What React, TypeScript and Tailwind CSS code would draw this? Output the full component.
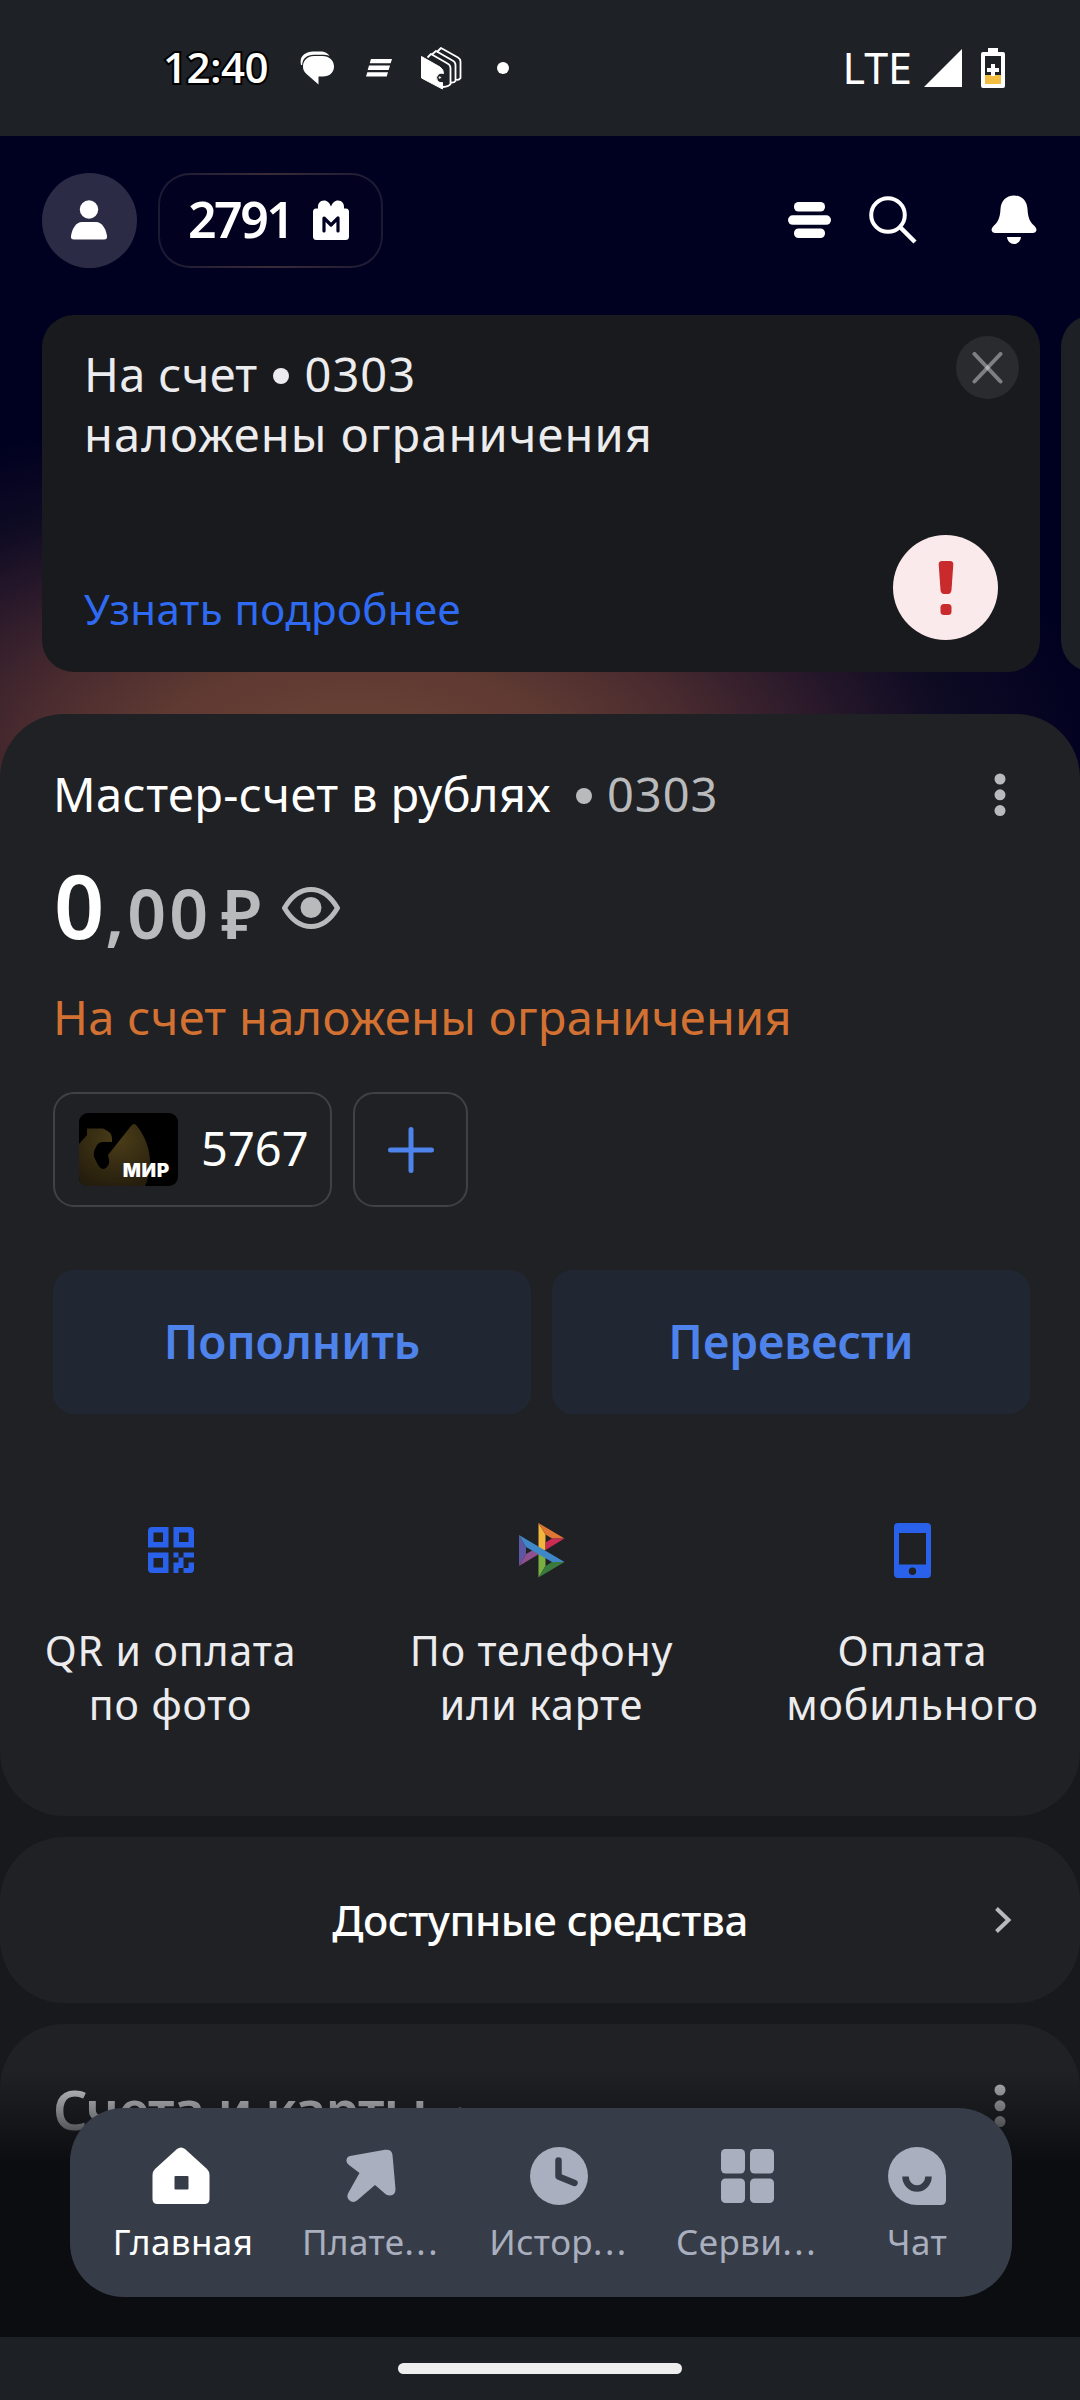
import type { ReactNode } from "react";

interface IconProps {
  className?: string;
}

interface QuickAction {
  lines: string[];
  icon: ReactNode;
}

interface NavItem {
  label: string;
  clipped?: boolean;
  icon: ReactNode;
  width: string;
  active?: boolean;
}

// ---------- Иконки статус-бара ----------

const ChatBubblesIcon = () => (
  <svg width="34" height="34" viewBox="0 0 34 34" fill="#fff">
    <path d="M1 14C-1 5 5 1 13 0.500H20C25 0.500 28 2.500 29.500 5C27 4 25 3.800 22 3.800H14C7 3.800 2.500 7.500 2.200 14Z" />
    <path d="M14 5H22.500C29 5 34 9.500 34 15.500C34 21.500 29.500 25.500 23 25.500H18.500V33.500L6.500 23C4 20.800 3 18.500 3 15.500C3 9.500 7.500 5 14 5Z" />
  </svg>
);

const StripesIcon = () => (
  <svg width="26" height="18" viewBox="0 0 26 18" fill="#fff">
    <path d="M5 0H26L24.700 4.300H3.700ZM3 6.600H24L22.700 10.900H1.700ZM1.300 13.200H22L20.700 17.500H0Z" />
  </svg>
);

const CardsIcon = () => (
  <svg width="41" height="43" viewBox="0 0 41 43" fill="none" stroke="#fff" strokeWidth="1.8" strokeLinejoin="round">
    <path d="M16 5L20 1L37 10.500Q39.500 12 39.500 14.500V31Q38 33.500 34.500 32.500" />
    <path d="M11 7.500L15 4L31.500 13.500Q34.500 15 34.500 18V34Q33 36 29.500 35.500" />
    <path d="M6.500 10.500L10 7L26.500 16.500Q29.500 18 29.500 21V37Q28 39.500 22 40" />
    <path
      d="M0.500 9.500L19 20Q22.500 22 22.500 26.500Q20 25.500 17.500 27Q14 30 16.500 34Q19 36.500 21.500 35.500V42L0.500 31Z"
      fill="#fff"
      strokeWidth="1"
    />
    <circle cx="18.800" cy="30.500" r="1.600" fill="#fff" stroke="#1e2125" strokeWidth="1" />
  </svg>
);

const SignalIcon = () => (
  <svg width="38" height="38" viewBox="0 0 38 38" fill="#fff">
    <path d="M38 0V38H0Z" />
  </svg>
);

const BatteryIcon = () => (
  <svg width="24" height="40" viewBox="0 0 24 40">
    <path d="M7 0H17V4H22Q24 4 24 6V38Q24 40 22 40H2Q0 40 0 38V6Q0 4 2 4H7Z" fill="#fff" />
    <path d="M4 8H20V27H4Z" fill="#1e2125" />
    <path d="M4 27H20V36H4Z" fill="#f3bd42" />
    <path d="M10 16H14V20H18V24H14V28H10V24H6V20H10Z" fill="#fff" />
  </svg>
);

// ---------- Иконки шапки ----------

const UserIcon = () => (
  <svg width="38" height="40" viewBox="0 0 38 40" fill="#fff">
    <circle cx="19" cy="9.500" r="9.200" />
    <path d="M12 22H26C32 22 36 29 37 36Q37.500 39.500 34 39.500H4Q0.500 39.500 1 36C2 29 6 22 12 22Z" />
  </svg>
);

const GiftIcon = () => (
  <svg width="36" height="40" viewBox="0 0 36 40">
    <path
      d="M5 8.500C4.500 3.500 7 0.500 11 0.500C14.500 0.500 16.500 3 18 6.500C19.500 3 21.500 0.500 25 0.500C29 0.500 31.500 3.500 31 8.500H33Q36 8.500 36 12V36.500Q36 40 32.500 40H3.500Q0 40 0 36.500V12Q0 8.500 3 8.500Z"
      fill="#fff"
    />
    <path
      d="M11 31V18L18 25L25 18V31"
      fill="none"
      stroke="#000020"
      strokeWidth="3.200"
      strokeLinecap="round"
      strokeLinejoin="round"
    />
  </svg>
);

const MenuIcon = () => (
  <svg width="43" height="36" viewBox="0 0 43 36" fill="#fff">
    <rect x="6" y="0" width="31" height="9.500" rx="4.500" />
    <rect x="0" y="13.300" width="43" height="9.500" rx="4.700" />
    <rect x="6" y="26.500" width="31" height="9.500" rx="4.500" />
  </svg>
);

const SearchIcon = () => (
  <svg width="48" height="48" viewBox="0 0 48 48" fill="none" stroke="#fff">
    <circle cx="19" cy="19" r="16.800" strokeWidth="4" />
    <path d="M31 31L46 46" strokeWidth="4.500" />
  </svg>
);

const BellIcon = () => (
  <svg width="46" height="50" viewBox="0 0 46 50" fill="#fff">
    <path d="M23 0.500C31 0.500 36 6 36.500 14C37 23 39 27 43.500 31Q45.500 33 45.500 35Q45 38 41.500 38H4.500Q1 38 0.500 35Q0.500 33 2.500 31C7 27 9 23 9.500 14C10 6 15 0.500 23 0.500Z" />
    <path d="M16 42H30C29.500 46 27 49 23 49C19 49 16.500 46 16 42Z" />
  </svg>
);

// ---------- Иконки карточек ----------

const CloseIcon = () => (
  <svg width="32" height="32" viewBox="0 0 32 32" stroke="#fff" strokeOpacity="0.400" strokeWidth="4" strokeLinecap="round">
    <path d="M2.500 2L28.500 29.500" />
    <path d="M28.500 2L2.500 29.500" />
  </svg>
);

const ExclamationIcon = () => (
  <svg width="16" height="54" viewBox="0 0 16 54" fill="#c92a2b">
    <path d="M4 0H12Q15.500 0 15.300 3.500L13.500 29Q13 33 10 33H6Q3 33 2.500 29L0.700 3.500Q0.500 0 4 0Z" />
    <rect x="2.500" y="43" width="11" height="11" rx="3.500" />
  </svg>
);

const KebabIcon = () => (
  <svg width="12" height="44" viewBox="0 0 12 44" fill="#b9babc">
    <circle cx="6" cy="6" r="5.500" />
    <circle cx="6" cy="21.800" r="5.500" />
    <circle cx="6" cy="37.600" r="5.500" />
  </svg>
);

const EyeIcon = () => (
  <svg width="58" height="42" viewBox="0 0 58 42">
    <path
      d="M2.500 21C9 10 18 2.500 29 2.500C40 2.500 49 10 55.500 21C49 32 40 39.500 29 39.500C18 39.500 9 32 2.500 21Z"
      fill="none"
      stroke="#b9babc"
      strokeWidth="5"
      strokeLinejoin="round"
    />
    <circle cx="29" cy="20.500" r="10.500" fill="#b9babc" />
  </svg>
);

const PlusIcon = () => (
  <svg width="46" height="46" viewBox="0 0 46 46" stroke="#4f83ec" strokeWidth="5" strokeLinecap="round">
    <path d="M23 2.500V43.500M2.500 23H43.500" />
  </svg>
);

// Миниатюра карты: капля и завиток на чёрном фоне
const CardThumb = () => (
  <div className="relative h-[73px] w-[99px] overflow-hidden rounded-[9px] bg-black">
    <svg width="100" height="73" viewBox="0 0 100 73">
      <defs>
        <radialGradient id="gold" cx="0.550" cy="0.250" r="0.800">
          <stop offset="0" stopColor="#4a3d18" />
          <stop offset="1" stopColor="#251d0d" />
        </radialGradient>
      </defs>
      <path
        d="M0 31L8 22V15.500H24Q33 19 33 25V29L24 29Q19 29 17 34Q14 39 15 44L19 52Q23 58 27 55Q31 51 30 47L29 42L52 13Q55 9 58 13C66 23 72 38 71 52Q70 65 66 73H0Z"
        fill="url(#gold)"
      />
    </svg>
    <span className="absolute right-[8px] bottom-[8px] font-['Inter',sans-serif] text-[19px] leading-[15px] font-black tracking-[0.7px] text-white">
      МИР
    </span>
  </div>
);

const QrIcon = () => (
  <svg width="46" height="46" viewBox="0 0 46 46" fill="#2a61ea">
    <path fillRule="evenodd" d="M4 0H20.500V20.500H0V4Q0 0 4 0ZM5.500 5.500V15H15V5.500Z" />
    <path fillRule="evenodd" d="M25.500 0H42Q46 0 46 4V20.500H25.500ZM31 5.500V15H40.500V5.500Z" />
    <path fillRule="evenodd" d="M0 25.500H20.500V46H4Q0 46 0 42ZM5.500 31V40.500H15V31Z" />
    <path d="M25.500 25.500H30.500V30.500H25.500ZM35.500 25.500H46V30.500H35.500ZM30.500 30.500H35.500V41H30.500V46H25.500V35.500H30.500ZM40.500 35.500H46V42Q46 46 42 46H35.500V41H40.500Z" />
  </svg>
);

const SbpIcon = () => (
  <svg width="46" height="55" viewBox="0 0 46 55">
    <path d="M0 12L7 24V31L0 43Z" fill="#5b57a2" />
    <path d="M0 43L7 31L14 27L20 31Z" fill="#90508f" />
    <path d="M19.500 0L26.500 11.500V27H19.500Z" fill="#f2b63c" />
    <path d="M19.500 0L45.500 15.500H33L26.500 11.500Z" fill="#df7634" />
    <path d="M45.500 15.500L26.500 27V19.500L33 15.500Z" fill="#c92c55" />
    <path d="M19.500 30H26.500V43L19.500 54.500Z" fill="#7ab042" />
    <path d="M19.500 54.500L26.500 43L33 39H45.500Z" fill="#3a7a3c" />
    <path d="M0 12L45.500 39H33L7 24Z" fill="#3f87c7" />
  </svg>
);

const PhoneIcon = () => (
  <svg width="37" height="55" viewBox="0 0 37 55" fill="#2a61ea">
    <path
      fillRule="evenodd"
      d="M4 0H33Q37 0 37 4V51Q37 55 33 55H4Q0 55 0 51V4Q0 0 4 0ZM5 10V41.500H32V10ZM18.500 44.500A3.700 3.700 0 1 0 18.500 51.900A3.700 3.700 0 1 0 18.500 44.500Z"
    />
  </svg>
);

const ChevronRightIcon = () => (
  <svg width="17" height="26" viewBox="0 0 17 26" fill="none" stroke="#b9babc" strokeWidth="4">
    <path d="M1.500 1.500L13.500 13L1.500 24.500" />
  </svg>
);

const ChevronUpIcon = ({ className }: IconProps) => (
  <svg className={className} width="26" height="17" viewBox="0 0 26 17" fill="none" stroke="#b9babc" strokeWidth="4">
    <path d="M2 15L13 3L24 15" />
  </svg>
);

// ---------- Иконки нижнего меню ----------

const HomeIcon = () => (
  <svg className="mr-[5px]" width="58" height="58" viewBox="0 0 58 58">
    <path
      d="M25 2Q29 -1 33 2L55 22Q57.500 24.500 57.500 28V52Q57.500 57 52.500 57H5.500Q0.500 57 0.500 52V28Q0.500 24.500 3 22Z"
      fill="currentColor"
    />
    <rect x="22.500" y="29" width="14" height="13.500" rx="1" fill="#373d48" />
  </svg>
);

const ArrowIcon = () => (
  <svg width="50" height="54" viewBox="0 0 50 54" fill="currentColor">
    <path d="M4 7L39 0.700Q46 0 46.500 6L49.500 40Q49.500 46 44 46.500Q42 46.500 40 45.500L29 36L11 51.500Q7 54.500 3 51Q0 48 2.500 43.500L13.500 24L3 16Q0 14 0.500 11Q1 7.500 4 7Z" />
  </svg>
);

const ClockIcon = () => (
  <svg width="58" height="58" viewBox="0 0 58 58">
    <circle cx="29" cy="29" r="29" fill="currentColor" />
    <path
      d="M28.500 13.500V29.500L44.500 36"
      fill="none"
      stroke="#373d48"
      strokeWidth="6.500"
      strokeLinecap="round"
      strokeLinejoin="round"
    />
  </svg>
);

const GridIcon = () => (
  <svg width="53" height="54" viewBox="0 0 53 54" fill="currentColor">
    <rect width="24" height="24.500" rx="4.500" />
    <rect x="29" width="24" height="24.500" rx="4.500" />
    <rect y="29.500" width="24" height="24.500" rx="4.500" />
    <rect x="29" y="29.500" width="24" height="24.500" rx="4.500" />
  </svg>
);

const SmileIcon = () => (
  <svg width="58" height="58" viewBox="0 0 58 58">
    <path d="M29 0A29 29 0 0 1 58 29V53Q58 58 53 58H29A29 29 0 0 1 29 0Z" fill="currentColor" />
    <path d="M17.500 29.500A11.500 12 0 0 0 40.500 29.500" fill="none" stroke="#373d48" strokeWidth="6.500" />
  </svg>
);

const quickActions: QuickAction[] = [
  { lines: ["QR и оплата", "по фото"], icon: <QrIcon /> },
  { lines: ["По телефону", "или карте"], icon: <SbpIcon /> },
  { lines: ["Оплата", "мобильного"], icon: <PhoneIcon /> },
];

const navItems: NavItem[] = [
  { label: "Главная", icon: <HomeIcon />, width: "w-[188px]", active: true },
  { label: "Плате", clipped: true, icon: <ArrowIcon />, width: "w-[188px]" },
  { label: "Истор", clipped: true, icon: <ClockIcon />, width: "w-[188px]" },
  { label: "Серви", clipped: true, icon: <GridIcon />, width: "w-[188px]" },
  { label: "Чат", icon: <SmileIcon />, width: "w-[152px]" },
];

function StatusBar() {
  return (
    <div className="flex h-[136px] shrink-0 items-center justify-between bg-[#1e2125] pr-[75px] pl-[163px]">
      <div className="flex items-center">
        <span className="mb-[2px] w-[105px] text-[42px] leading-none font-semibold tracking-[-0.5px] whitespace-nowrap text-white font-['Open_Sans',sans-serif] [paint-order:stroke_fill] [-webkit-text-stroke:4px_#000]">
          12:40
        </span>
        <div className="ml-8 flex items-center">
          <ChatBubblesIcon />
        </div>
        <div className="ml-8">
          <StripesIcon />
        </div>
        <div className="ml-[29px]">
          <CardsIcon />
        </div>
        <div className="ml-[35px] size-3 rounded-full bg-white" />
      </div>
      <div className="flex items-center">
        <span className="mb-[2px] text-[43px] leading-none text-white">LTE</span>
        <div className="ml-3">
          <SignalIcon />
        </div>
        <div className="ml-[19px]">
          <BatteryIcon />
        </div>
      </div>
    </div>
  );
}

function Header() {
  return (
    <div className="flex h-[168px] items-center pr-[43px] pl-[42px]">
      <div className="flex h-[95px] w-[95px] items-center justify-center rounded-full bg-[#2b2b45] pr-[2px]">
        <UserIcon />
      </div>
      {/* Баллы */}
      <div className="ml-[21px] h-[95px] w-[225px] rounded-[32px] bg-linear-to-r from-[#1b1a33] via-[#3b2b38] to-[#1b1a33] p-[2px]">
        <div className="flex h-full items-center rounded-[30px] bg-[#020120] pl-[28px]">
          <span className="mb-[3px] w-[98px] text-[50px] leading-none font-semibold tracking-[-2.5px] text-white">
            2791
          </span>
          <div className="ml-[27px]">
            <GiftIcon />
          </div>
        </div>
      </div>
      <div className="ml-auto flex items-center">
        <MenuIcon />
        <div className="ml-[38px]">
          <SearchIcon />
        </div>
        <div className="ml-[74px]">
          <BellIcon />
        </div>
      </div>
    </div>
  );
}

function AlertCarousel() {
  return (
    <div className="mt-[11px] flex gap-[21px] overflow-hidden pl-[42px]">
      <div className="flex h-[357px] w-[998px] shrink-0 justify-between rounded-[32px] bg-[#181a1d] pl-[42px]">
        <div className="flex flex-col pt-[29px]">
          <div className="flex items-center text-[47px] leading-[60px] text-[#ececee]">
            <span className="tracking-[0.3px]">На счет</span>
            <span className="mt-1 mr-[16px] ml-[15px] size-4 rounded-full bg-[#ececee]" />
            <span className="tracking-[1px]">0303</span>
          </div>
          <p className="text-[47px] leading-[60px] tracking-[1.1px] text-[#ececee]">наложены ограничения</p>
          <a className="mt-[115px] text-[42px] leading-[60px] tracking-[0.4px] text-[#2f6bf2]">Узнать подробнее</a>
        </div>
        <div className="flex flex-col items-end justify-between pt-[21px] pb-[32px]">
          <button className="mr-[21px] flex size-[63px] items-center justify-center rounded-full bg-[#2a2b2e]">
            <CloseIcon />
          </button>
          <div className="mr-[42px] flex size-[105px] items-center justify-center rounded-full bg-[#fbeaeb]">
            <ExclamationIcon />
          </div>
        </div>
      </div>
      <div className="h-[357px] w-[998px] shrink-0 rounded-[32px] bg-[#1d2024]" />
    </div>
  );
}

function AccountCard() {
  return (
    <div className="mt-[42px] h-[1102px] rounded-[64px] bg-[#1f2124] px-[53px] pt-[50px]">
      <div className="flex h-[60px] items-center justify-between">
        <div className="flex items-center text-[47px] leading-[60px]">
          <span className="tracking-[0.4px] text-white">Мастер-счет в рублях</span>
          <span className="mt-1 mr-[15px] ml-[25px] size-4 rounded-full bg-[#b9babc]" />
          <span className="tracking-[1px] text-[#b9babc]">0303</span>
        </div>
        <div className="mr-[21px] pt-[2px]">
          <KebabIcon />
        </div>
      </div>

      {/* Баланс */}
      <div className="mt-[40px] flex h-[90px] items-center">
        <div className="flex items-baseline pl-px text-[68px] leading-[90px] font-semibold text-[#b9babc]">
          <span className="text-[88px] tracking-[1px] text-white">0</span>
          <span className="tracking-[3px]">,00</span>
          <span className="ml-[10px]">₽</span>
        </div>
        <div className="mb-[2px] ml-[21px]">
          <EyeIcon />
        </div>
      </div>

      <p className="mt-[33px] text-[47px] leading-[60px] tracking-[0.3px] text-[#d37132]">
        На счет наложены ограничения
      </p>

      <div className="mt-[45px] flex gap-[21px]">
        <div className="flex h-[115px] w-[279px] items-center rounded-[21px] border-2 border-[#404145] pl-[24px]">
          <CardThumb />
          <span className="mb-[4px] ml-[23px] text-[47px] leading-[60px] text-white">5767</span>
        </div>
        <button className="flex h-[115px] w-[115px] items-center justify-center rounded-[21px] border-2 border-[#404145]">
          <PlusIcon />
        </button>
      </div>

      <div className="mt-[63px] flex gap-[21px]">
        <button className="h-[144px] w-[478px] shrink-0 rounded-[21px] bg-[#212732] pb-[3px] text-[46px] leading-[60px] font-semibold text-[#4f83ec]">
          Пополнить
        </button>
        <button className="h-[144px] w-[478px] shrink-0 rounded-[21px] bg-[#212732] pb-[3px] text-[46px] leading-[60px] font-semibold text-[#4f83ec]">
          Перевести
        </button>
      </div>

      <div className="-mr-[71px] -ml-[68px] mt-[96px] flex justify-center">
        {quickActions.map((action) => (
          <div key={action.lines[0]} className="flex w-[371px] flex-col items-center">
            <div className="flex h-[80px] items-center">{action.icon}</div>
            <p className="mt-[33px] text-center text-[41px] leading-[54px] tracking-[0.9px] whitespace-nowrap text-[#ececee]">
              {action.lines[0]}
              <br />
              {action.lines[1]}
            </p>
          </div>
        ))}
      </div>
    </div>
  );
}

function BottomNav() {
  return (
    <nav className="absolute bottom-[40px] left-[70px] flex h-[189px] w-[942px] rounded-[54px] bg-[#373d48] pl-[19px]">
      {navItems.map((item) => (
        <div
          key={item.label}
          className={`flex flex-col items-center pt-[35px] ${item.width} ${item.active ? "text-white" : "text-[#a9afbe]"}`}
        >
          <div className="flex h-[66px] items-center">{item.icon}</div>
          <span className="mt-[9px] text-[35px] leading-[48px] tracking-[0.4px] whitespace-nowrap">
            {item.label}
            {item.clipped && <span className="tracking-[2.5px]">...</span>}
          </span>
        </div>
      ))}
    </nav>
  );
}

export default function App() {
  return (
    <div className="flex h-[2400px] w-[1080px] flex-col overflow-hidden bg-[#18191d] font-['Noto_Sans',sans-serif]">
      <StatusBar />

      <div className="relative flex-1 overflow-hidden bg-[#18191d] bg-[radial-gradient(ellipse_660px_300px_at_355px_614px,#6b4236_0%,#5f3a32_30%,#4a2b2f_50%,#28182a_72%,#0e0b23_90%,#000020_115%)] bg-[length:100%_760px] bg-no-repeat">
        <Header />
        <AlertCarousel />
        <AccountCard />

        <div className="mt-[21px] flex h-[166px] items-center rounded-[64px] bg-[#1f2124] pr-[68px] pl-[85px]">
          <p className="flex-1 pb-px text-center text-[42px] leading-[60px] font-medium tracking-[-0.5px] text-white">
            Доступные средства
          </p>
          <ChevronRightIcon />
        </div>

        <div className="mt-[21px] h-[400px] rounded-[64px] bg-[#1f2124] px-[53px]">
          <div className="flex items-center pt-[49px]">
            <h2 className="text-[54px] leading-[72px] font-semibold tracking-[-0.8px] text-[#d8d9db]">Счета и карты</h2>
            <ChevronUpIcon className="mt-3 ml-[20px]" />
            <div className="mb-[6px] ml-auto pr-[21px]">
              <KebabIcon />
            </div>
          </div>
        </div>

        {/* Затемнение под меню */}
        <div className="absolute inset-x-0 bottom-0 h-[267px] bg-linear-to-b from-[#0c0d11]/0 via-[#0c0d11] via-35% to-[#0c0d11]" />
        <BottomNav />
      </div>

      {/* Системная панель жестов */}
      <div className="flex h-[63px] shrink-0 items-center justify-center bg-[#1d2024]">
        <div className="h-[11px] w-[284px] rounded-full bg-[#edeeed]" />
      </div>
    </div>
  );
}
